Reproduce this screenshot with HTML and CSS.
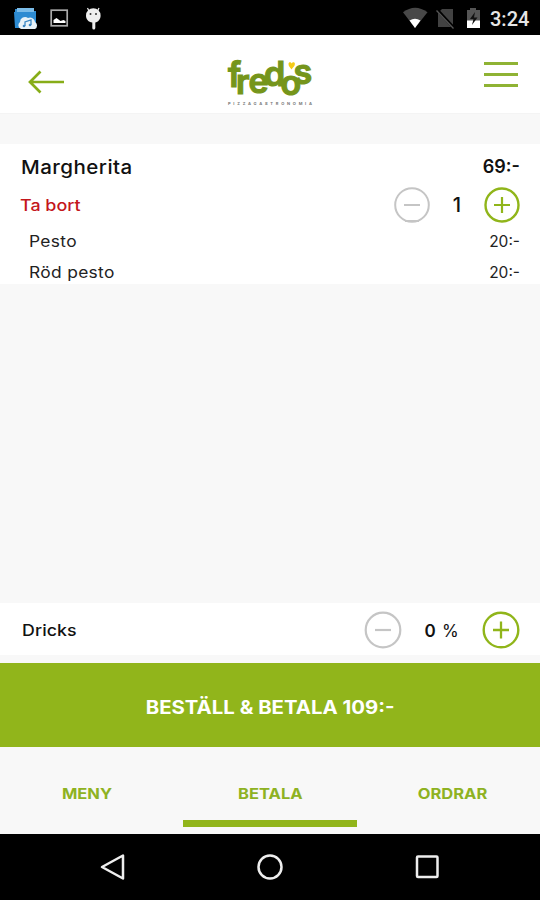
FILE: index.html
```
<!DOCTYPE html>
<html lang="sv">
<head>
<meta charset="utf-8">
<title>Fredo's</title>
<link rel="stylesheet" href="styles.css">
</head>
<body>
<div class="phone">
  <div class="status">
    <svg class="status-left" width="120" height="35" viewBox="0 0 120 35">
      <path d="M15 9h9l2 2h10v17H15z" fill="#348ed2"/>
      <path d="M17 8h17v6H17z" fill="#7bbce9"/>
      <path d="M14 12h22l-1 16H15z" fill="#2d8bd2"/>
      <path d="M21 29a4 4 0 0 1-1-7 5 5 0 0 1 8-4 5 5 0 0 1 7 4 4 4 0 0 1 0 7z" fill="#e8f2f8"/>
      <path d="M25 26v-4l6-2v5" fill="none" stroke="#3c88c4" stroke-width="1.300"/>
      <circle cx="24" cy="26" r="1.300" fill="#3c88c4"/><circle cx="30" cy="25" r="1.300" fill="#3c88c4"/>
      <rect x="51.200" y="10.200" width="16" height="15.600" fill="none" stroke="#aaa" stroke-width="1.700"/>
      <path d="M53.500 23v-3l3-2 4 3 3-1 2 1v2z" fill="#fff"/>
      <path d="M86 15.500a7.300 7.300 0 0 1 14.600 0c0 4-2.600 6.500-5.300 7.100v5.500a1.500 1.500 0 0 1-3 0v-5.500C88.500 22 86 19.500 86 15.500z" fill="#eee"/>
      <path d="M89 11 87.500 8M97.500 11l1.500-3" stroke="#eee" stroke-width="1.200"/>
      <circle cx="90.500" cy="14" r="1" fill="#333"/><circle cx="96" cy="14" r="1" fill="#333"/>
    </svg>
    <svg class="status-right" width="85" height="35" viewBox="400 0 85 35">
      <path d="M403 12.300Q415 3 427.500 12.300L415 28z" fill="#484848"/>
      <path d="M409.500 20.500q5.500-3.500 11 0L415 28z" fill="#fff"/>
      <path d="M442 9h11v18h-15V13z" fill="#424242"/>
      <path d="M437 9.500 454 28" stroke="#000" stroke-width="3"/>
      <path d="M436.500 10.500 453.500 28.500" stroke="#555" stroke-width="1.300"/>
      <path d="M470 8h6v2h4v11h-13V10h3z" fill="#555"/>
      <path d="M467 20.500h13V28h-13z" fill="#fff"/>
      <path d="M475 12l-5 7h3.500l-1.500 6 5.500-7.500H474z" fill="#111"/>
    </svg>
    <span class="clock">3:24</span>
  </div>
  <header class="header">
    <svg class="back" width="36" height="24" viewBox="0 0 36 24"><path d="M12.500 1.500 2 12l10.500 10.500M2 12h34" fill="none" stroke="#87ad18" stroke-width="2.700"/></svg>
    <svg class="logo" width="90" height="50" viewBox="225 57 90 50" role="img" aria-label="Fredo's Pizzagastronomia">
      <text class="wordmark" x="228 236 248.500 264 280.500 293.500" y="86.500 94 93 85.500 94.500 84">fredos</text>
      <path d="M291.500 69.500c-1.500-2-3-3.500-3-5.500 0-2.500 2.500-2 3.200-.6.700-1.500 3.300-1.700 3.200.6 0 2-2 3.500-3.400 5.500z" fill="#f5cb16"/>
      <text class="tagline" x="228" y="104.500" textLength="84">PIZZAGASTRONOMIA</text>
    </svg>
    <div class="menu"><i></i><i></i><i></i></div>
  </header>
  <main class="cart">
    <section class="item">
      <div class="row title"><span class="name">Margherita</span><span class="price">69:-</span></div>
      <div class="row controls"><span class="remove">Ta bort</span>
        <div class="stepper">
          <svg width="36" height="35" viewBox="0 0 36 35"><circle cx="18" cy="18" r="16.800" fill="none" stroke="#c5c5c5" stroke-width="2"/><path d="M10 18h16M11 34h14" stroke="#c5c5c5" stroke-width="2"/></svg>
          <span class="count">1</span>
          <svg width="36" height="35" viewBox="0 0 36 35"><circle cx="18" cy="18" r="16.500" fill="none" stroke="#90b51a" stroke-width="2.400"/><path d="M10 18h16M18 10v16" stroke="#90b51a" stroke-width="2.200"/></svg>
        </div>
      </div>
      <div class="row extra"><span class="topping">Pesto</span><span class="eprice">20:-</span></div>
      <div class="row extra"><span class="topping">Röd pesto</span><span class="eprice">20:-</span></div>
    </section>
  </main>
  <section class="tip">
    <span class="tip-label">Dricks</span>
    <div class="stepper">
      <svg width="38" height="38" viewBox="0 0 38 38"><circle cx="19" cy="19" r="17.300" fill="none" stroke="#c5c5c5" stroke-width="2.200"/><path d="M11 19h16" stroke="#c5c5c5" stroke-width="2.200"/></svg>
      <span class="percent"><b>0</b> %</span>
      <svg width="38" height="38" viewBox="0 0 38 38"><circle cx="19" cy="19" r="17.300" fill="none" stroke="#90b51a" stroke-width="2.400"/><path d="M11 19h16M19 10.500v17" stroke="#90b51a" stroke-width="2.300"/></svg>
    </div>
  </section>
  <button class="order"><span>BESTÄLL &amp; BETALA 109:-</span></button>
  <nav class="tabs">
    <div class="tab"><span>MENY</span></div>
    <div class="tab active"><span>BETALA</span></div>
    <div class="tab"><span>ORDRAR</span></div>
  </nav>
  <div class="navbar">
    <svg width="30" height="30" viewBox="0 0 30 30"><path d="M25 3.500v23L4 15z" fill="none" stroke="#eee" stroke-width="2.500" stroke-linejoin="round"/></svg>
    <svg width="30" height="30" viewBox="0 0 30 30"><circle cx="15" cy="15" r="11.500" fill="none" stroke="#eee" stroke-width="2.500"/></svg>
    <svg width="30" height="30" viewBox="0 0 30 30"><rect x="5" y="4.500" width="20.500" height="20.500" rx="1" fill="none" stroke="#eee" stroke-width="2.500"/></svg>
  </div>
</div>
</body>
</html>
```
FILE: styles.css
```
* { box-sizing: border-box; }
body { margin: 0; font-family: Inter, "Open Sans", sans-serif; color: #111; background: #f8f8f8; }
svg { display: block; flex: none; overflow: visible; }
.phone { width: 540px; height: 900px; display: flex; flex-direction: column; overflow: hidden; }
.status { height: 35px; flex: none; background: #000; display: flex; align-items: center; }
.status-right { margin-left: auto; }
.clock { width: 55px; padding: 3px 0 0 5px; font: 500 20px/24px Roboto, sans-serif; color: #e6e6e6; white-space: nowrap; }
.header { height: 79px; flex: none; background: #fff; border-bottom: 1px solid #f4f4f4; display: flex; align-items: flex-start; }
.back { margin: 35px 0 0 28px; }
.logo { margin: 22px 0 0 161px; }
.wordmark { font: 600 34px Inter, sans-serif; fill: #75951b; stroke: #75951b; stroke-width: 1.2px; }
.tagline { font: 700 4px Inter, sans-serif; fill: #777; }
.menu { margin: 27px 22px 0 auto; width: 34px; display: flex; flex-direction: column; gap: 8.500px; }
.menu i { height: 2.700px; background: #8fb334; }
.cart { flex: 1; padding-top: 30px; background: #f8f8f8; }
.item { height: 140px; background: #fff; padding-top: 4px; }
.row { display: flex; justify-content: space-between; align-items: center; padding: 0 20px 0 21px; white-space: nowrap; }
.name, .remove, .topping, .tip-label { display: inline-block; transform-origin: left; }
.title { height: 36px; font-size: 18.500px; font-weight: 500; padding-top: 1px; }
.name { letter-spacing: .4px; transform: scaleX(1.110); }
.price { font-weight: 600; font-size: 18px; }
.controls { height: 41px; padding-left: 20px; }
.remove { font-size: 16px; font-weight: 500; color: #c4161c; transform: scaleX(1.120); }
.stepper { display: flex; align-items: center; }
.count { width: 54px; text-align: center; font-size: 20px; font-weight: 500; padding-top: 1px; }
.extra { height: 31px; padding-left: 29px; padding-top: 2px; font-size: 15.500px; color: #222; }
.topping { letter-spacing: .3px; transform: scaleX(1.120); }
.tip { height: 52px; flex: none; background: #fff; display: flex; align-items: center; justify-content: space-between; padding: 2px 20px 0 22px; }
.tip-label { font-size: 16px; font-weight: 500; letter-spacing: .1px; transform: scaleX(1.110); }
.percent { width: 80px; text-align: center; font-size: 17px; letter-spacing: .8px; padding-top: 1px; }
.percent b { font-weight: 600; }
.order { height: 92px; flex: none; border: 0; border-top: 8px solid #f8f8f8; background: #91b51b; color: #fff; font: 700 18.500px Inter, sans-serif; padding: 3px 0 0; }
.order span { display: inline-block; transform: scaleX(1.100); }
.tabs { height: 87px; flex: none; background: #f8f8f8; display: grid; grid-template-columns: repeat(3, 174px); column-gap: 9px; padding-bottom: 7px; justify-content: center; }
.tab { display: flex; justify-content: center; align-items: center; padding-top: 19px; border-bottom: 7px solid transparent; color: #8eb222; font-size: 14.500px; font-weight: 700; }
.tab span { transform: scaleX(1.140); }
.tab.active { border-color: #91b51b; }
.navbar { height: 66px; flex: none; background: #000; display: flex; justify-content: center; align-items: center; gap: 127px; }
```
